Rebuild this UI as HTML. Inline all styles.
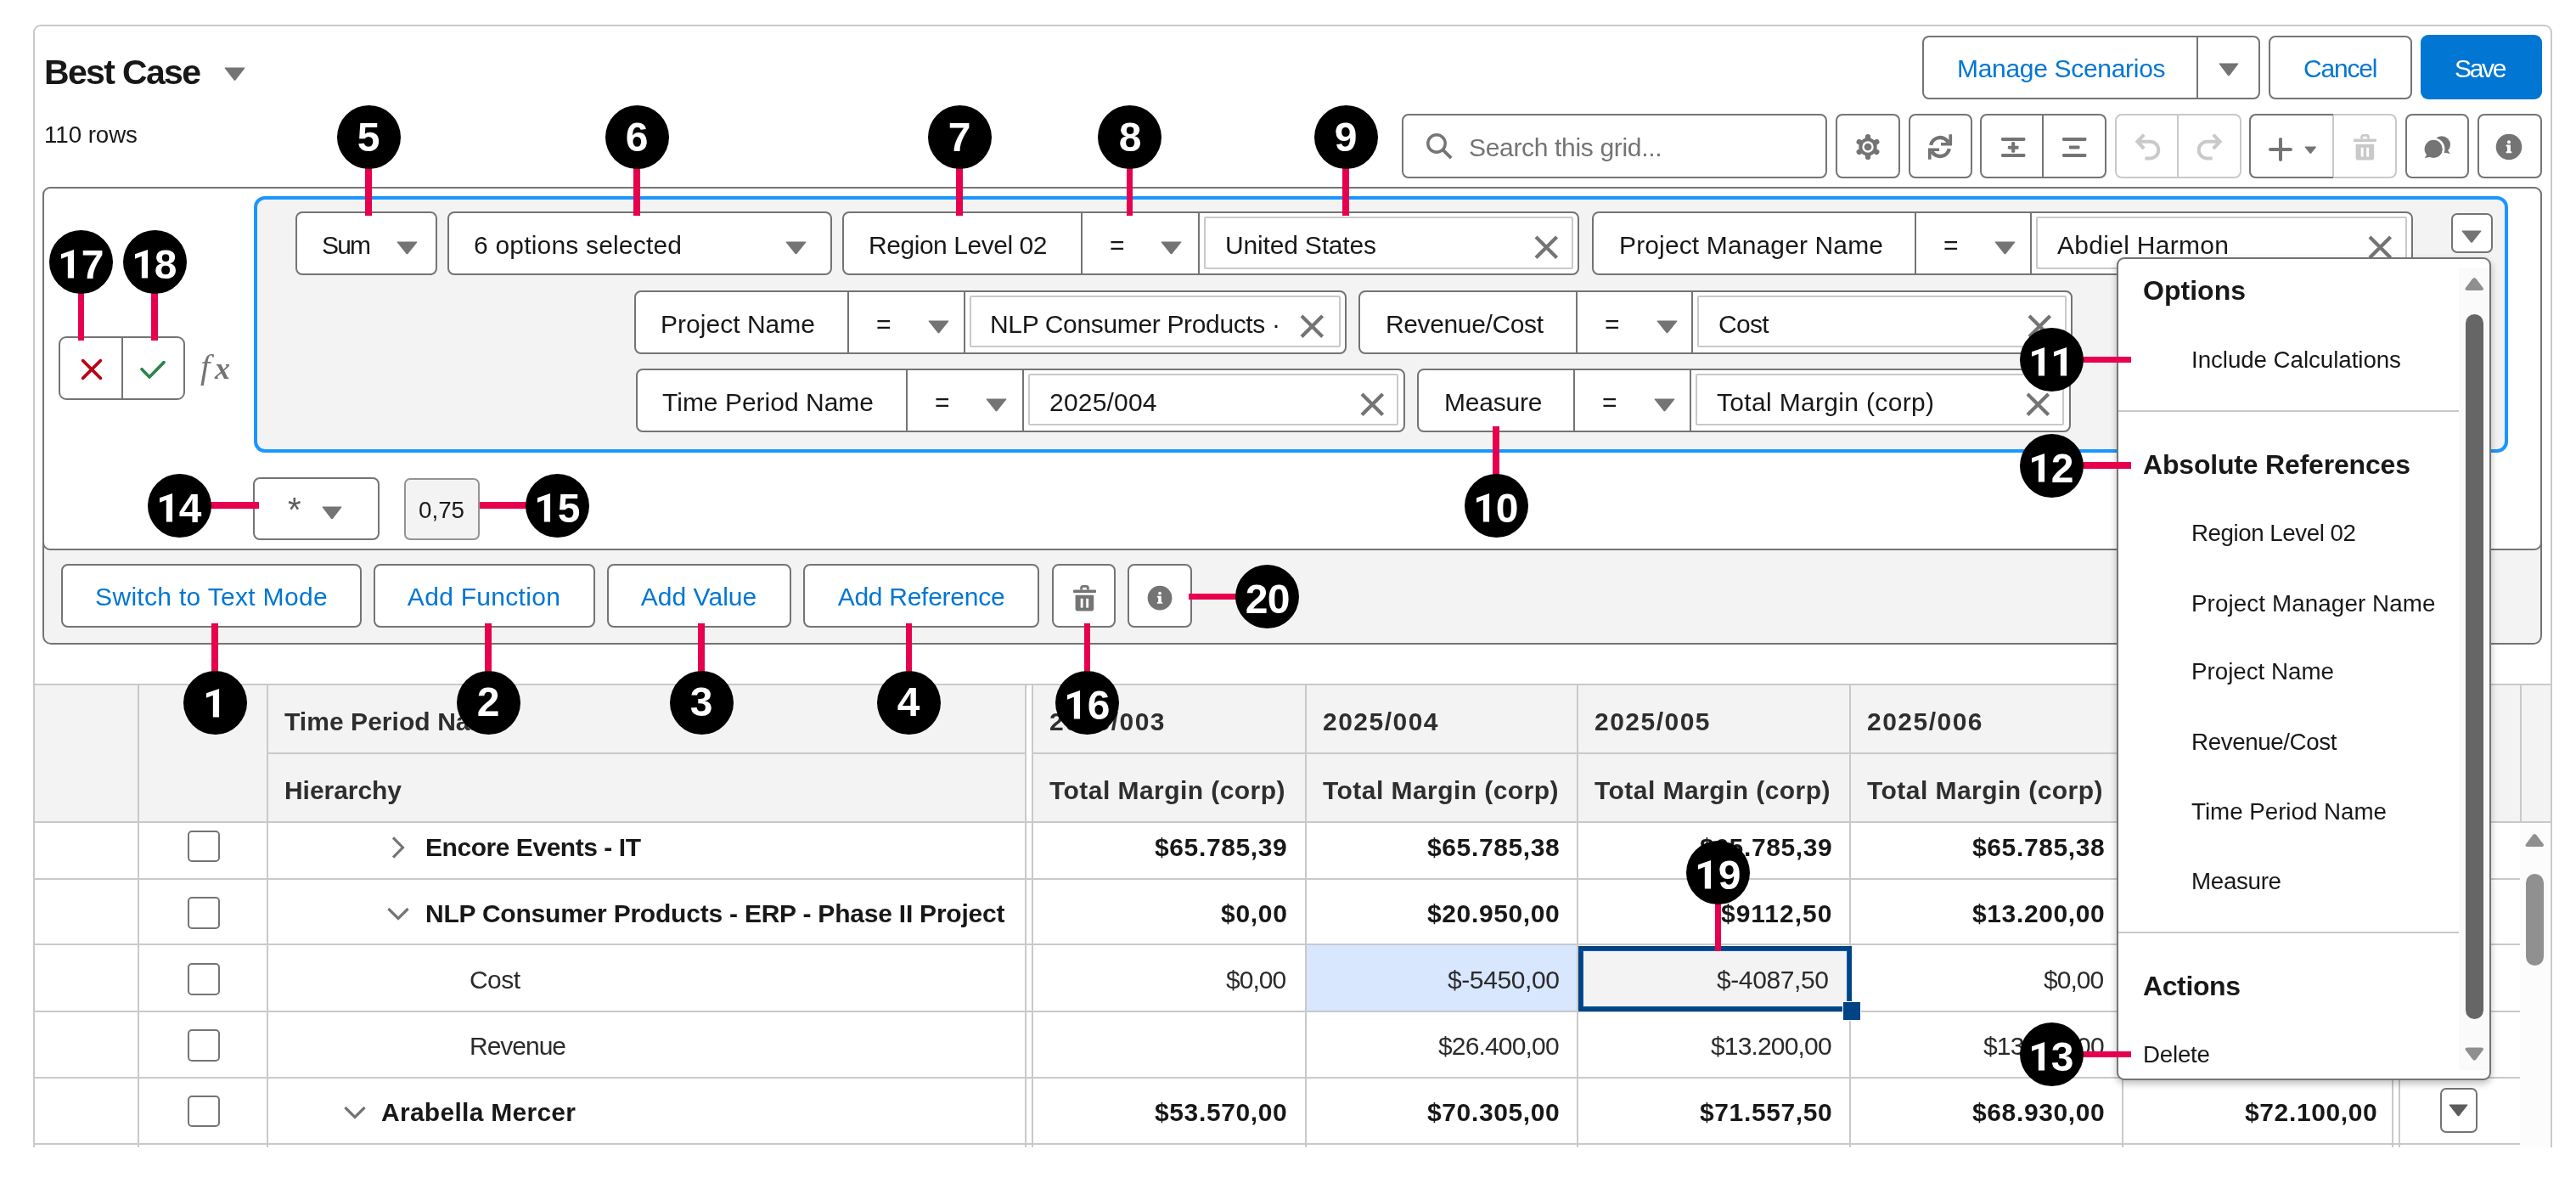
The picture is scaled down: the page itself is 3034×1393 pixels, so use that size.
<!DOCTYPE html>
<html><head><meta charset="utf-8"><title>Formula editor</title><style>html,body{margin:0;padding:0;background:#fff}
body{width:3034px;height:1393px}
#r{position:relative;width:3034px;height:1393px;overflow:hidden;background:#fff;font-family:'Liberation Sans',sans-serif}
#r>div,#r>span,#r>svg{position:absolute;box-sizing:content-box}
#r>span{white-space:nowrap;display:block;will-change:transform}
svg{overflow:visible}</style></head><body><div id="r">
<div style="left:39px;top:29px;width:2963px;height:1400px;border:2px solid #c9c9c9;border-radius:9px;background:#fff"></div>
<span id="t0" style="left:52px;top:64.97px;font:normal bold 41px/41px 'Liberation Sans',sans-serif;color:#181818;letter-spacing:-1.66px;">Best Case</span>
<svg style="left:263.5px;top:79.0px;" width="25" height="16" viewBox="0 0 25 16"><path d="M1.2 0.4 H23.8 Q25 0.4 24.2 1.6 L13.4 15.4 Q12.5 16.2 11.6 15.4 L0.8 1.6 Q0 0.4 1.2 0.4Z" fill="#747474"/></svg>
<span id="t1" style="left:52px;top:144.74px;font:normal normal 27.75px/27.75px 'Liberation Sans',sans-serif;color:#181818;letter-spacing:-0.078px;">110 rows</span>
<div style="left:2264.2px;top:41.5px;width:393.8px;height:71.5px;border:2px solid #747474;background:#fff;border-radius:8px;"></div>
<div style="left:2586.5px;top:43px;width:2.0px;height:72px;background:#747474;"></div>
<span id="t2" style="left:2304.5px;top:66.34px;font:normal normal 30px/30px 'Liberation Sans',sans-serif;color:#0176d3;letter-spacing:-0.31px;">Manage Scenarios</span>
<svg style="left:2612.5px;top:73.75px;" width="24" height="15.5" viewBox="0 0 24 15.5"><path d="M1.2 0.4 H22.8 Q24 0.4 23.2 1.6 L12.9 14.9 Q12.0 15.7 11.1 14.9 L0.8 1.6 Q0 0.4 1.2 0.4Z" fill="#747474"/></svg>
<div style="left:2672.2px;top:41.5px;width:165.3px;height:71.5px;border:2px solid #747474;background:#fff;border-radius:8px;"></div>
<span id="t3" style="left:2712.5px;top:66.34px;font:normal normal 30px/30px 'Liberation Sans',sans-serif;color:#0176d3;letter-spacing:-1.178px;">Cancel</span>
<div style="left:2850.5px;top:41px;width:143.0px;height:76px;background:#0176d3;border-radius:9px;"></div>
<span id="t4" style="left:2891px;top:66.34px;font:normal normal 30px/30px 'Liberation Sans',sans-serif;color:#fff;letter-spacing:-2.297px;">Save</span>
<div style="left:1651px;top:134px;width:497px;height:71.5px;border:2px solid #747474;background:#fff;border-radius:8px;"></div>
<svg style="left:1677.9px;top:155px;" width="36" height="36" viewBox="0 0 36 36"><circle cx="14" cy="14" r="10.2" fill="none" stroke="#747474" stroke-width="3.4"/><path d="M20.6 20.6 L31.2 31.2" stroke="#747474" stroke-width="3.9"/></svg>
<span id="t5" style="left:1729.5px;top:159.04px;font:normal normal 30px/30px 'Liberation Sans',sans-serif;color:#747474;letter-spacing:-0.33px;">Search this grid...</span>
<div style="left:2162px;top:134px;width:72px;height:71.5px;border:2px solid #747474;background:#fff;border-radius:8px;"></div>
<svg style="left:2184.4px;top:157px;" width="32" height="32" viewBox="0 0 32 32"><circle cx="16" cy="16" r="10.7" fill="#747474"/><path d="M16.00 8.00 L16.00 4.10 M22.93 12.00 L26.31 10.05 M22.93 20.00 L26.31 21.95 M16.00 24.00 L16.00 27.90 M9.07 20.00 L5.69 21.95 M9.07 12.00 L5.69 10.05 " stroke="#747474" stroke-width="6.3" stroke-linecap="round" fill="none"/><circle cx="16" cy="16" r="6.7" fill="#fff"/><circle cx="16" cy="16" r="4.35" fill="#747474"/></svg>
<div style="left:2248px;top:134px;width:71px;height:71.5px;border:2px solid #747474;background:#fff;border-radius:8px;"></div>
<svg style="left:2268.8px;top:157.3px;" width="32" height="32" viewBox="0 0 32 32"><path d="M5.20 13.90 A11 11 0 0 1 25.71 10.84" fill="none" stroke="#747474" stroke-width="4.5"/><path d="M26.80 18.10 A11 11 0 0 1 6.29 21.16" fill="none" stroke="#747474" stroke-width="4.5"/><path d="M26.4 1.3 H30.1 V14.4 H17 V11.1 H26.4Z" fill="#747474"/><path d="M5.6 30.7 H1.9 V17.6 H15 V20.9 H5.6Z" fill="#747474"/></svg>
<div style="left:2331.5px;top:134px;width:145.5px;height:71.5px;border:2px solid #747474;background:#fff;border-radius:8px;"></div>
<div style="left:2405.3px;top:136px;width:2.0px;height:71.5px;background:#747474;"></div>
<svg style="left:2356.9px;top:162.0px;" width="28.4" height="23.6" viewBox="0 0 28.4 23.6"><rect x="0" y="0" width="28.4" height="3.9" rx="1.4" fill="#747474"/><rect x="0" y="19" width="28.4" height="3.9" rx="1.4" fill="#747474"/><rect x="7.8" y="9.7" width="12.8" height="4" rx="1.4" fill="#747474"/><rect x="12.2" y="5" width="4" height="12.8" rx="1.4" fill="#747474"/></svg>
<svg style="left:2429.2px;top:162.0px;" width="28.4" height="23.6" viewBox="0 0 28.4 23.6"><rect x="0" y="0" width="28.4" height="3.9" rx="1.4" fill="#747474"/><rect x="0" y="19" width="28.4" height="3.9" rx="1.4" fill="#747474"/><rect x="7.8" y="9.6" width="12.8" height="3.8" rx="1.4" fill="#747474"/></svg>
<div style="left:2490.5px;top:134px;width:145.5px;height:71.5px;border:2px solid #c9c9c9;background:#fff;border-radius:8px;"></div>
<div style="left:2564.0px;top:136px;width:2.0px;height:71.5px;background:#c9c9c9;"></div>
<svg style="left:2514.6px;top:157.6px;" width="30" height="31" viewBox="0 0 30 31"><g><path d="M10.2 0.6 L2.4 8.8 L10.2 17 M3 8.8 H17.4 A9.85 9.85 0 0 1 17.4 28.5 H11.4" fill="none" stroke="#c9c9c9" stroke-width="4" stroke-linejoin="miter"/></g></svg>
<svg style="left:2586.8px;top:157.6px;" width="30" height="31" viewBox="0 0 30 31"><g transform="translate(30,0) scale(-1,1)"><path d="M10.2 0.6 L2.4 8.8 L10.2 17 M3 8.8 H17.4 A9.85 9.85 0 0 1 17.4 28.5 H11.4" fill="none" stroke="#c9c9c9" stroke-width="4" stroke-linejoin="miter"/></g></svg>
<div style="left:2649px;top:134px;width:170px;height:71.5px;border:2px solid #c9c9c9;background:#fff;border-radius:8px;"></div>
<div style="left:2649px;top:134px;width:97px;height:71.5px;border:2px solid #747474;border-right:none;border-radius:8px 0 0 8px;background:#fff"></div>
<div style="left:2747.4px;top:136px;width:2.0px;height:71.5px;background:#c9c9c9;"></div>
<svg style="left:2672px;top:162.3px;" width="28" height="28" viewBox="0 0 28 28"><path d="M14 2 V26 M2 14 H26" stroke="#747474" stroke-width="4" stroke-linecap="round"/></svg>
<svg style="left:2714.1px;top:171.9px;" width="14.6" height="9.2" viewBox="0 0 14.6 9.2"><path d="M1.2 0.4 H13.4 Q14.6 0.4 13.799999999999999 1.6 L8.2 8.6 Q7.3 9.399999999999999 6.3999999999999995 8.6 L0.8 1.6 Q0 0.4 1.2 0.4Z" fill="#747474"/></svg>
<svg style="left:2772.4px;top:157.8px;" width="27" height="31" viewBox="0 0 27 31"><rect x="0" y="5.4" width="27" height="3.6" rx="1" fill="#c9c9c9"/><path d="M9.6 5.6 V3.4 Q9.6 1.4 11.6 1.4 H15.4 Q17.4 1.4 17.4 3.4 V5.6" fill="none" stroke="#c9c9c9" stroke-width="2.8"/><path d="M2.6 11.8 H24.2 V27.8 Q24.2 30.6 21.4 30.6 H5.4 Q2.6 30.6 2.6 27.8Z" fill="#c9c9c9"/><rect x="8.7" y="15.8" width="2.9" height="10.8" fill="#fff"/><rect x="15.2" y="15.8" width="2.9" height="10.8" fill="#fff"/></svg>
<div style="left:2833px;top:134px;width:71.3px;height:71.5px;border:2px solid #747474;background:#fff;border-radius:8px;"></div>
<svg style="left:2854.5px;top:160.2px;" width="32" height="27" viewBox="0 0 32 27"><circle cx="20.8" cy="10.4" r="10.2" fill="#747474"/><path d="M27 16 L31 21 L23 19.4Z" fill="#747474"/><circle cx="11.2" cy="15.4" r="13.2" fill="#fff"/><circle cx="11.2" cy="15.4" r="10.6" fill="#747474"/><path d="M4 21 L0.8 26 L9 24.6Z" fill="#747474"/></svg>
<div style="left:2918.2px;top:134px;width:71.5px;height:71.5px;border:2px solid #747474;background:#fff;border-radius:8px;"></div>
<svg style="left:2939.2px;top:157.4px;" width="32.0" height="32.0" viewBox="0 0 32 32"><circle cx="16" cy="16" r="15.3" fill="#747474"/><circle cx="16" cy="10.2" r="2" fill="#fff"/><path d="M12.6 13.6 H17.9 V20.4 Q17.9 21.4 19.3 21.6 V23.2 H12.6 V21.6 Q14 21.4 14 20.4 V16.4 Q14 15.4 12.6 15.2Z" fill="#fff"/></svg>
<div style="left:50px;top:220px;width:2940px;height:535px;border:2px solid #747474;background:#f3f3f3;border-radius:10px;"></div>
<div style="left:50px;top:220px;width:2940px;height:423.5px;border:2px solid #747474;background:#fff;border-radius:9px;"></div>
<div style="left:298.5px;top:230.6px;width:2647.3px;height:294.0px;border:4px solid #1b96ff;background:#f3f3f3;border-radius:13px;"></div>
<div style="left:69.3px;top:396px;width:144.9px;height:71.2px;border:2px solid #747474;background:#fff;border-radius:9px;"></div>
<div style="left:143.0px;top:398px;width:2.0px;height:71.2px;background:#747474;"></div>
<svg style="left:93.5px;top:421px;" width="28" height="28" viewBox="0 0 28 28"><path d="M3.6 3.6 L24.4 24.4 M24.4 3.6 L3.6 24.4" stroke="#ba0517" stroke-width="3.7" stroke-linecap="round" fill="none"/></svg>
<svg style="left:164px;top:423px;" width="32" height="26" viewBox="0 0 32 26"><path d="M3 11.8 L12 21 L29 3.6" stroke="#2e844a" stroke-width="3.7" stroke-linecap="round" stroke-linejoin="round" fill="none"/></svg>
<span id="t6" style="left:236px;top:411.47px;font:italic normal 41px/41px 'Liberation Serif',serif;color:#747474;letter-spacing:0px;">f</span>
<span id="t7" style="left:252.5px;top:415.91px;font:italic bold 36px/36px 'Liberation Serif',serif;color:#747474;letter-spacing:0px;">x</span>
<div style="left:347.5px;top:249px;width:163.0px;height:71px;border:2px solid #747474;background:#fff;border-radius:8px;"></div>
<span id="t8" style="left:378.5px;top:273.85px;font:normal normal 30px/30px 'Liberation Sans',sans-serif;color:#181818;letter-spacing:-1.844px;">Sum</span>
<svg style="left:467.0px;top:283.75px;" width="25" height="15.5" viewBox="0 0 25 15.5"><path d="M1.2 0.4 H23.8 Q25 0.4 24.2 1.6 L13.4 14.9 Q12.5 15.7 11.6 14.9 L0.8 1.6 Q0 0.4 1.2 0.4Z" fill="#747474"/></svg>
<div style="left:526.5px;top:249px;width:449.0px;height:71px;border:2px solid #747474;background:#fff;border-radius:8px;"></div>
<span id="t9" style="left:558px;top:273.85px;font:normal normal 30px/30px 'Liberation Sans',sans-serif;color:#181818;letter-spacing:0.186px;">6 options selected</span>
<svg style="left:925.0px;top:283.75px;" width="25" height="15.5" viewBox="0 0 25 15.5"><path d="M1.2 0.4 H23.8 Q25 0.4 24.2 1.6 L13.4 14.9 Q12.5 15.7 11.6 14.9 L0.8 1.6 Q0 0.4 1.2 0.4Z" fill="#747474"/></svg>
<div style="left:991.5px;top:249px;width:864.5px;height:71px;border:2px solid #747474;background:#fff;border-radius:8px;"></div>
<div style="left:1272.7px;top:251px;width:2.0px;height:71px;background:#747474;"></div>
<div style="left:1411.0px;top:251px;width:2.0px;height:71px;background:#747474;"></div>
<span id="t10" style="left:1023.0px;top:273.85px;font:normal normal 30px/30px 'Liberation Sans',sans-serif;color:#181818;letter-spacing:-0.452px;">Region Level 02</span>
<span id="t11" style="left:1306.7px;top:273.85px;font:normal normal 30px/30px 'Liberation Sans',sans-serif;color:#181818;letter-spacing:-1.531px;">=</span>
<svg style="left:1367.2px;top:283.75px;" width="25" height="15.5" viewBox="0 0 25 15.5"><path d="M1.2 0.4 H23.8 Q25 0.4 24.2 1.6 L13.4 14.9 Q12.5 15.7 11.6 14.9 L0.8 1.6 Q0 0.4 1.2 0.4Z" fill="#747474"/></svg>
<div style="left:1418px;top:255px;width:430.6px;height:57.6px;border:2px solid #c9c9c9;background:#fff;border-radius:2px;"></div>
<span id="t12" style="left:1442.5px;top:273.85px;font:normal normal 30px/30px 'Liberation Sans',sans-serif;color:#181818;letter-spacing:-0.176px;">United States</span>
<svg style="left:1807.2px;top:277.2px;" width="28.6" height="28.6" viewBox="0 0 28.6 28.6"><path d="M2 2 L26.6 26.6 M26.6 2 L2 26.6" stroke="#747474" stroke-width="4.2" fill="none"/></svg>
<div style="left:1875px;top:249px;width:963px;height:71px;border:2px solid #747474;background:#fff;border-radius:8px;"></div>
<div style="left:2254.5px;top:251px;width:2.0px;height:71px;background:#747474;"></div>
<div style="left:2391.0px;top:251px;width:2.0px;height:71px;background:#747474;"></div>
<span id="t13" style="left:1906.5px;top:273.85px;font:normal normal 30px/30px 'Liberation Sans',sans-serif;color:#181818;letter-spacing:0.133px;">Project Manager Name</span>
<span id="t14" style="left:2288.5px;top:273.85px;font:normal normal 30px/30px 'Liberation Sans',sans-serif;color:#181818;letter-spacing:-1.531px;">=</span>
<svg style="left:2349.0px;top:283.75px;" width="25" height="15.5" viewBox="0 0 25 15.5"><path d="M1.2 0.4 H23.8 Q25 0.4 24.2 1.6 L13.4 14.9 Q12.5 15.7 11.6 14.9 L0.8 1.6 Q0 0.4 1.2 0.4Z" fill="#747474"/></svg>
<div style="left:2398px;top:255px;width:432.6px;height:57.6px;border:2px solid #c9c9c9;background:#fff;border-radius:2px;"></div>
<span id="t15" style="left:2422.5px;top:273.85px;font:normal normal 30px/30px 'Liberation Sans',sans-serif;color:#181818;letter-spacing:0.297px;">Abdiel Harmon</span>
<svg style="left:2789.2px;top:277.2px;" width="28.6" height="28.6" viewBox="0 0 28.6 28.6"><path d="M2 2 L26.6 26.6 M26.6 2 L2 26.6" stroke="#747474" stroke-width="4.2" fill="none"/></svg>
<div style="left:746.5px;top:342px;width:835.5px;height:70.5px;border:2px solid #747474;background:#fff;border-radius:8px;"></div>
<div style="left:998.0px;top:344px;width:2.0px;height:70.5px;background:#747474;"></div>
<div style="left:1134.5px;top:344px;width:2.0px;height:70.5px;background:#747474;"></div>
<span id="t16" style="left:778.0px;top:366.60px;font:normal normal 30px/30px 'Liberation Sans',sans-serif;color:#181818;letter-spacing:0.024px;">Project Name</span>
<span id="t17" style="left:1032px;top:366.60px;font:normal normal 30px/30px 'Liberation Sans',sans-serif;color:#181818;letter-spacing:-1.531px;">=</span>
<svg style="left:1092.5px;top:376.5px;" width="25" height="15.5" viewBox="0 0 25 15.5"><path d="M1.2 0.4 H23.8 Q25 0.4 24.2 1.6 L13.4 14.9 Q12.5 15.7 11.6 14.9 L0.8 1.6 Q0 0.4 1.2 0.4Z" fill="#747474"/></svg>
<div style="left:1141.5px;top:348px;width:433.1px;height:57.1px;border:2px solid #c9c9c9;background:#fff;border-radius:2px;"></div>
<span id="t18" style="left:1166.0px;top:366.60px;font:normal normal 30px/30px 'Liberation Sans',sans-serif;color:#181818;letter-spacing:-0.345px;">NLP Consumer Products ·</span>
<svg style="left:1531.2px;top:369.95px;" width="28.6" height="28.6" viewBox="0 0 28.6 28.6"><path d="M2 2 L26.6 26.6 M26.6 2 L2 26.6" stroke="#747474" stroke-width="4.2" fill="none"/></svg>
<div style="left:1600px;top:342px;width:837px;height:70.5px;border:2px solid #747474;background:#fff;border-radius:8px;"></div>
<div style="left:1856.0px;top:344px;width:2.0px;height:70.5px;background:#747474;"></div>
<div style="left:1992.0px;top:344px;width:2.0px;height:70.5px;background:#747474;"></div>
<span id="t19" style="left:1631.5px;top:366.60px;font:normal normal 30px/30px 'Liberation Sans',sans-serif;color:#181818;letter-spacing:-0.374px;">Revenue/Cost</span>
<span id="t20" style="left:1890px;top:366.60px;font:normal normal 30px/30px 'Liberation Sans',sans-serif;color:#181818;letter-spacing:-1.531px;">=</span>
<svg style="left:1950.5px;top:376.5px;" width="25" height="15.5" viewBox="0 0 25 15.5"><path d="M1.2 0.4 H23.8 Q25 0.4 24.2 1.6 L13.4 14.9 Q12.5 15.7 11.6 14.9 L0.8 1.6 Q0 0.4 1.2 0.4Z" fill="#747474"/></svg>
<div style="left:1999px;top:348px;width:430.6px;height:57.1px;border:2px solid #c9c9c9;background:#fff;border-radius:2px;"></div>
<span id="t21" style="left:2023.5px;top:366.60px;font:normal normal 30px/30px 'Liberation Sans',sans-serif;color:#181818;letter-spacing:-0.729px;">Cost</span>
<svg style="left:2388.2px;top:369.95px;" width="28.6" height="28.6" viewBox="0 0 28.6 28.6"><path d="M2 2 L26.6 26.6 M26.6 2 L2 26.6" stroke="#747474" stroke-width="4.2" fill="none"/></svg>
<div style="left:748.5px;top:434px;width:902.0px;height:70.5px;border:2px solid #747474;background:#fff;border-radius:8px;"></div>
<div style="left:1066.5px;top:436px;width:2.0px;height:70.5px;background:#747474;"></div>
<div style="left:1204.0px;top:436px;width:2.0px;height:70.5px;background:#747474;"></div>
<span id="t22" style="left:780.0px;top:458.60px;font:normal normal 30px/30px 'Liberation Sans',sans-serif;color:#181818;letter-spacing:0.002px;">Time Period Name</span>
<span id="t23" style="left:1100.5px;top:458.60px;font:normal normal 30px/30px 'Liberation Sans',sans-serif;color:#181818;letter-spacing:-1.531px;">=</span>
<svg style="left:1161.0px;top:468.5px;" width="25" height="15.5" viewBox="0 0 25 15.5"><path d="M1.2 0.4 H23.8 Q25 0.4 24.2 1.6 L13.4 14.9 Q12.5 15.7 11.6 14.9 L0.8 1.6 Q0 0.4 1.2 0.4Z" fill="#747474"/></svg>
<div style="left:1211px;top:440px;width:432.1px;height:57.1px;border:2px solid #c9c9c9;background:#fff;border-radius:2px;"></div>
<span id="t24" style="left:1235.5px;top:458.60px;font:normal normal 30px/30px 'Liberation Sans',sans-serif;color:#181818;letter-spacing:0.194px;">2025/004</span>
<svg style="left:1601.7px;top:461.95px;" width="28.6" height="28.6" viewBox="0 0 28.6 28.6"><path d="M2 2 L26.6 26.6 M26.6 2 L2 26.6" stroke="#747474" stroke-width="4.2" fill="none"/></svg>
<div style="left:1669px;top:434px;width:765.5px;height:70.5px;border:2px solid #747474;background:#fff;border-radius:8px;"></div>
<div style="left:1853.0px;top:436px;width:2.0px;height:70.5px;background:#747474;"></div>
<div style="left:1990.0px;top:436px;width:2.0px;height:70.5px;background:#747474;"></div>
<span id="t25" style="left:1700.5px;top:458.60px;font:normal normal 30px/30px 'Liberation Sans',sans-serif;color:#181818;letter-spacing:-0.203px;">Measure</span>
<span id="t26" style="left:1887px;top:458.60px;font:normal normal 30px/30px 'Liberation Sans',sans-serif;color:#181818;letter-spacing:-1.531px;">=</span>
<svg style="left:1947.5px;top:468.5px;" width="25" height="15.5" viewBox="0 0 25 15.5"><path d="M1.2 0.4 H23.8 Q25 0.4 24.2 1.6 L13.4 14.9 Q12.5 15.7 11.6 14.9 L0.8 1.6 Q0 0.4 1.2 0.4Z" fill="#747474"/></svg>
<div style="left:1997px;top:440px;width:430.1px;height:57.1px;border:2px solid #c9c9c9;background:#fff;border-radius:2px;"></div>
<span id="t27" style="left:2021.5px;top:458.60px;font:normal normal 30px/30px 'Liberation Sans',sans-serif;color:#181818;letter-spacing:0.329px;">Total Margin (corp)</span>
<svg style="left:2385.7px;top:461.95px;" width="28.6" height="28.6" viewBox="0 0 28.6 28.6"><path d="M2 2 L26.6 26.6 M26.6 2 L2 26.6" stroke="#747474" stroke-width="4.2" fill="none"/></svg>
<div style="left:2887px;top:250.5px;width:44.5px;height:43.5px;border:2px solid #747474;background:#fff;border-radius:7px;"></div>
<svg style="left:2899.3px;top:270.5px;" width="24" height="15" viewBox="0 0 24 15"><path d="M1.2 0.4 H22.8 Q24 0.4 23.2 1.6 L12.9 14.4 Q12.0 15.2 11.1 14.4 L0.8 1.6 Q0 0.4 1.2 0.4Z" fill="#747474"/></svg>
<div style="left:298px;top:561.5px;width:145px;height:70.0px;border:2px solid #747474;background:#fff;border-radius:8px;"></div>
<span id="t28" style="left:338.5px;top:580.46px;font:normal normal 40px/40px 'Liberation Sans',sans-serif;color:#5c5c5c;letter-spacing:0px;">*</span>
<svg style="left:378.5px;top:596.25px;" width="24" height="15.5" viewBox="0 0 24 15.5"><path d="M1.2 0.4 H22.8 Q24 0.4 23.2 1.6 L12.9 14.9 Q12.0 15.7 11.1 14.9 L0.8 1.6 Q0 0.4 1.2 0.4Z" fill="#747474"/></svg>
<div style="left:476px;top:562.5px;width:85px;height:69.0px;border:2px solid #939393;background:#f3f3f3;border-radius:7px;"></div>
<span id="t29" style="left:492.5px;top:586.74px;font:normal normal 27.75px/27.75px 'Liberation Sans',sans-serif;color:#181818;letter-spacing:-0.005px;">0,75</span>
<div style="left:71.5px;top:664px;width:350.0px;height:71px;border:2px solid #747474;background:#fff;border-radius:8px;"></div>
<span id="t30" style="left:248.5px;transform:translateX(-50%);top:687.75px;font:normal normal 30px/30px 'Liberation Sans',sans-serif;color:#0176d3;letter-spacing:0.311px;">Switch to Text Mode</span>
<div style="left:439.5px;top:664px;width:257.0px;height:71px;border:2px solid #747474;background:#fff;border-radius:8px;"></div>
<span id="t31" style="left:570.0px;transform:translateX(-50%);top:687.75px;font:normal normal 30px/30px 'Liberation Sans',sans-serif;color:#0176d3;letter-spacing:0.293px;">Add Function</span>
<div style="left:714.5px;top:664px;width:213.5px;height:71px;border:2px solid #747474;background:#fff;border-radius:8px;"></div>
<span id="t32" style="left:823.25px;transform:translateX(-50%);top:687.75px;font:normal normal 30px/30px 'Liberation Sans',sans-serif;color:#0176d3;letter-spacing:0.035px;">Add Value</span>
<div style="left:946px;top:664px;width:273.5px;height:71px;border:2px solid #747474;background:#fff;border-radius:8px;"></div>
<span id="t33" style="left:1084.75px;transform:translateX(-50%);top:687.75px;font:normal normal 30px/30px 'Liberation Sans',sans-serif;color:#0176d3;letter-spacing:-0.262px;">Add Reference</span>
<div style="left:1238.5px;top:664px;width:71.5px;height:71px;border:2px solid #747474;background:#fff;border-radius:8px;"></div>
<svg style="left:1263.6px;top:688.6px;" width="27" height="31" viewBox="0 0 27 31"><rect x="0" y="5.4" width="27" height="3.6" rx="1" fill="#747474"/><path d="M9.6 5.6 V3.4 Q9.6 1.4 11.6 1.4 H15.4 Q17.4 1.4 17.4 3.4 V5.6" fill="none" stroke="#747474" stroke-width="2.8"/><path d="M2.6 11.8 H24.2 V27.8 Q24.2 30.6 21.4 30.6 H5.4 Q2.6 30.6 2.6 27.8Z" fill="#747474"/><rect x="8.7" y="15.8" width="2.9" height="10.8" fill="#fff"/><rect x="15.2" y="15.8" width="2.9" height="10.8" fill="#fff"/></svg>
<div style="left:1328px;top:664px;width:71.5px;height:71px;border:2px solid #747474;background:#fff;border-radius:8px;"></div>
<svg style="left:1350.74px;top:688.74px;" width="30.12" height="30.12" viewBox="0 0 32 32"><circle cx="16" cy="16" r="15.3" fill="#747474"/><circle cx="16" cy="10.2" r="2" fill="#fff"/><path d="M12.6 13.6 H17.9 V20.4 Q17.9 21.4 19.3 21.6 V23.2 H12.6 V21.6 Q14 21.4 14 20.4 V16.4 Q14 15.4 12.6 15.2Z" fill="#fff"/></svg>
<div style="left:41px;top:806px;width:2963px;height:162px;background:#f3f3f3;"></div>
<div style="left:1538.5px;top:1113px;width:319.5px;height:76.5px;background:#d8e6fe;"></div>
<div style="left:41px;top:805.0px;width:2963px;height:2.0px;background:#c9c9c9;"></div>
<div style="left:314.5px;top:885.5px;width:2511.0px;height:2.0px;background:#c9c9c9;"></div>
<div style="left:41px;top:967.0px;width:2963px;height:2.0px;background:#c9c9c9;"></div>
<div style="left:41px;top:1033.5px;width:2926.7px;height:2.0px;background:#c9c9c9;"></div>
<div style="left:41px;top:1111.0px;width:2926.7px;height:2.0px;background:#c9c9c9;"></div>
<div style="left:41px;top:1189.5px;width:2926.7px;height:2.0px;background:#c9c9c9;"></div>
<div style="left:41px;top:1267.5px;width:2926.7px;height:2.0px;background:#c9c9c9;"></div>
<div style="left:41px;top:1345.5px;width:2926.7px;height:2.0px;background:#c9c9c9;"></div>
<div style="left:1209.3px;top:807px;width:5.7px;height:160px;background:#fff;"></div>
<div style="left:162.0px;top:806px;width:2.0px;height:544.5px;background:#c9c9c9;"></div>
<div style="left:313.5px;top:806px;width:2.0px;height:544.5px;background:#c9c9c9;"></div>
<div style="left:1207.3px;top:806px;width:2.0px;height:544.5px;background:#c9c9c9;"></div>
<div style="left:1215.0px;top:806px;width:2.0px;height:544.5px;background:#c9c9c9;"></div>
<div style="left:1536.5px;top:806px;width:2.0px;height:544.5px;background:#c9c9c9;"></div>
<div style="left:1857.0px;top:806px;width:2.0px;height:544.5px;background:#c9c9c9;"></div>
<div style="left:2178.0px;top:806px;width:2.0px;height:544.5px;background:#c9c9c9;"></div>
<div style="left:2499.0px;top:806px;width:2.0px;height:544.5px;background:#c9c9c9;"></div>
<div style="left:2817.2px;top:806px;width:2.0px;height:544.5px;background:#c9c9c9;"></div>
<div style="left:2824.5px;top:806px;width:2.0px;height:544.5px;background:#c9c9c9;"></div>
<div style="left:2967.7px;top:806px;width:2.0px;height:162px;background:#c9c9c9;"></div>
<span id="t34" style="left:334.5px;top:834.75px;font:normal bold 30px/30px 'Liberation Sans',sans-serif;color:#2e2e2e;letter-spacing:0.052px;">Time Period Name</span>
<span id="t35" style="left:334.5px;top:915.55px;font:normal bold 30px/30px 'Liberation Sans',sans-serif;color:#2e2e2e;letter-spacing:-0.053px;">Hierarchy</span>
<span id="t36" style="left:1236px;top:834.75px;font:normal bold 30px/30px 'Liberation Sans',sans-serif;color:#2e2e2e;letter-spacing:1.48px;">2025/003</span>
<span id="t37" style="left:1236px;top:915.55px;font:normal bold 30px/30px 'Liberation Sans',sans-serif;color:#2e2e2e;letter-spacing:0.448px;">Total Margin (corp)</span>
<span id="t38" style="left:1557.5px;top:834.75px;font:normal bold 30px/30px 'Liberation Sans',sans-serif;color:#2e2e2e;letter-spacing:1.48px;">2025/004</span>
<span id="t39" style="left:1557.5px;top:915.55px;font:normal bold 30px/30px 'Liberation Sans',sans-serif;color:#2e2e2e;letter-spacing:0.448px;">Total Margin (corp)</span>
<span id="t40" style="left:1878px;top:834.75px;font:normal bold 30px/30px 'Liberation Sans',sans-serif;color:#2e2e2e;letter-spacing:1.48px;">2025/005</span>
<span id="t41" style="left:1878px;top:915.55px;font:normal bold 30px/30px 'Liberation Sans',sans-serif;color:#2e2e2e;letter-spacing:0.448px;">Total Margin (corp)</span>
<span id="t42" style="left:2199px;top:834.75px;font:normal bold 30px/30px 'Liberation Sans',sans-serif;color:#2e2e2e;letter-spacing:1.48px;">2025/006</span>
<span id="t43" style="left:2199px;top:915.55px;font:normal bold 30px/30px 'Liberation Sans',sans-serif;color:#2e2e2e;letter-spacing:0.448px;">Total Margin (corp)</span>
<span id="t44" style="left:2520px;top:834.75px;font:normal bold 30px/30px 'Liberation Sans',sans-serif;color:#2e2e2e;letter-spacing:1.48px;">2025/007</span>
<span id="t45" style="left:2520px;top:915.55px;font:normal bold 30px/30px 'Liberation Sans',sans-serif;color:#2e2e2e;letter-spacing:0.448px;">Total Margin (corp)</span>
<div style="left:220.5px;top:977.5px;width:34.0px;height:33.5px;border:2px solid #747474;background:#fff;border-radius:5px;"></div>
<div style="left:220.5px;top:1056px;width:34.0px;height:33.5px;border:2px solid #747474;background:#fff;border-radius:5px;"></div>
<div style="left:220.5px;top:1134px;width:34.0px;height:33.5px;border:2px solid #747474;background:#fff;border-radius:5px;"></div>
<div style="left:220.5px;top:1212px;width:34.0px;height:33.5px;border:2px solid #747474;background:#fff;border-radius:5px;"></div>
<div style="left:220.5px;top:1289.7px;width:34.0px;height:33.5px;border:2px solid #747474;background:#fff;border-radius:5px;"></div>
<svg style="left:459.5px;top:984px;" width="18" height="28" viewBox="0 0 18 28"><path d="M3 2.4 L14.4 14 L3 25.6" fill="none" stroke="#747474" stroke-width="3.2"/></svg>
<span id="t46" style="left:501px;top:982.75px;font:normal bold 30px/30px 'Liberation Sans',sans-serif;color:#181818;letter-spacing:-0.456px;">Encore Events - IT</span>
<svg style="left:455.3px;top:1067px;" width="28" height="18" viewBox="0 0 28 18"><path d="M2.4 3 L14 14.4 L25.6 3" fill="none" stroke="#747474" stroke-width="3.2"/></svg>
<span id="t47" style="left:501px;top:1060.55px;font:normal bold 30px/30px 'Liberation Sans',sans-serif;color:#181818;letter-spacing:-0.22px;">NLP Consumer Products - ERP - Phase II Project</span>
<span id="t48" style="left:553px;top:1138.55px;font:normal normal 30px/30px 'Liberation Sans',sans-serif;color:#2b2b2b;letter-spacing:-0.562px;">Cost</span>
<span id="t49" style="left:553px;top:1216.75px;font:normal normal 30px/30px 'Liberation Sans',sans-serif;color:#2b2b2b;letter-spacing:-1.016px;">Revenue</span>
<svg style="left:403.5px;top:1301.3px;" width="28" height="18" viewBox="0 0 28 18"><path d="M2.4 3 L14 14.4 L25.6 3" fill="none" stroke="#747474" stroke-width="3.2"/></svg>
<span id="t50" style="left:448.5px;top:1294.75px;font:normal bold 30px/30px 'Liberation Sans',sans-serif;color:#181818;letter-spacing:0.277px;">Arabella Mercer</span>
<span id="t51" style="right:1518.5px;top:982.75px;font:normal bold 30px/30px 'Liberation Sans',sans-serif;color:#181818;letter-spacing:0.627px;margin-right:-0.627px;">$65.785,39</span>
<span id="t52" style="right:1197.0px;top:982.75px;font:normal bold 30px/30px 'Liberation Sans',sans-serif;color:#181818;letter-spacing:0.627px;margin-right:-0.627px;">$65.785,38</span>
<span id="t53" style="right:876.5px;top:982.75px;font:normal bold 30px/30px 'Liberation Sans',sans-serif;color:#181818;letter-spacing:0.627px;margin-right:-0.627px;">$65.785,39</span>
<span id="t54" style="right:555.5px;top:982.75px;font:normal bold 30px/30px 'Liberation Sans',sans-serif;color:#181818;letter-spacing:0.627px;margin-right:-0.627px;">$65.785,38</span>
<span id="t55" style="right:234px;top:982.75px;font:normal bold 30px/30px 'Liberation Sans',sans-serif;color:#181818;letter-spacing:0.627px;margin-right:-0.627px;">$65.785,39</span>
<span id="t56" style="right:1518.5px;top:1060.55px;font:normal bold 30px/30px 'Liberation Sans',sans-serif;color:#181818;letter-spacing:0.705px;margin-right:-0.705px;">$0,00</span>
<span id="t57" style="right:1197.0px;top:1060.55px;font:normal bold 30px/30px 'Liberation Sans',sans-serif;color:#181818;letter-spacing:0.627px;margin-right:-0.627px;">$20.950,00</span>
<span id="t58" style="right:876.5px;top:1060.55px;font:normal bold 30px/30px 'Liberation Sans',sans-serif;color:#181818;letter-spacing:0.988px;margin-right:-0.988px;">$9112,50</span>
<span id="t59" style="right:555.5px;top:1060.55px;font:normal bold 30px/30px 'Liberation Sans',sans-serif;color:#181818;letter-spacing:0.627px;margin-right:-0.627px;">$13.200,00</span>
<span id="t60" style="right:234px;top:1060.55px;font:normal bold 30px/30px 'Liberation Sans',sans-serif;color:#181818;letter-spacing:0.627px;margin-right:-0.627px;">$13.200,00</span>
<span id="t61" style="right:1518.5px;top:1138.55px;font:normal normal 30px/30px 'Liberation Sans',sans-serif;color:#2b2b2b;letter-spacing:-0.945px;margin-right:0.945px;">$0,00</span>
<span id="t62" style="right:1197.0px;top:1138.55px;font:normal normal 30px/30px 'Liberation Sans',sans-serif;color:#2b2b2b;letter-spacing:-0.403px;margin-right:0.403px;">$-5450,00</span>
<div style="left:1859px;top:1114px;width:311.5px;height:66.5px;border:5px solid #014486;background:#f3f3f3;box-shadow:inset 0 0 0 1px #0b5cab"></div>
<div style="left:2170px;top:1178.5px;width:20px;height:21px;background:#014486;border:1px solid #fff"></div>
<span id="t63" style="right:880.0px;top:1138.55px;font:normal normal 30px/30px 'Liberation Sans',sans-serif;color:#2b2b2b;letter-spacing:-0.403px;margin-right:0.403px;">$-4087,50</span>
<span id="t64" style="right:555.5px;top:1138.55px;font:normal normal 30px/30px 'Liberation Sans',sans-serif;color:#2b2b2b;letter-spacing:-0.945px;margin-right:0.945px;">$0,00</span>
<span id="t65" style="right:234px;top:1138.55px;font:normal normal 30px/30px 'Liberation Sans',sans-serif;color:#2b2b2b;letter-spacing:-0.945px;margin-right:0.945px;">$0,00</span>
<span id="t66" style="right:1197.0px;top:1216.75px;font:normal normal 30px/30px 'Liberation Sans',sans-serif;color:#2b2b2b;letter-spacing:-0.84px;margin-right:0.84px;">$26.400,00</span>
<span id="t67" style="right:876.5px;top:1216.75px;font:normal normal 30px/30px 'Liberation Sans',sans-serif;color:#2b2b2b;letter-spacing:-0.84px;margin-right:0.84px;">$13.200,00</span>
<span id="t68" style="right:555.5px;top:1216.75px;font:normal normal 30px/30px 'Liberation Sans',sans-serif;color:#2b2b2b;letter-spacing:-0.84px;margin-right:0.84px;">$13.200,00</span>
<span id="t69" style="right:234px;top:1216.75px;font:normal normal 30px/30px 'Liberation Sans',sans-serif;color:#2b2b2b;letter-spacing:-0.84px;margin-right:0.84px;">$13.200,00</span>
<span id="t70" style="right:1518.5px;top:1294.75px;font:normal bold 30px/30px 'Liberation Sans',sans-serif;color:#181818;letter-spacing:0.627px;margin-right:-0.627px;">$53.570,00</span>
<span id="t71" style="right:1197.0px;top:1294.75px;font:normal bold 30px/30px 'Liberation Sans',sans-serif;color:#181818;letter-spacing:0.627px;margin-right:-0.627px;">$70.305,00</span>
<span id="t72" style="right:876.5px;top:1294.75px;font:normal bold 30px/30px 'Liberation Sans',sans-serif;color:#181818;letter-spacing:0.627px;margin-right:-0.627px;">$71.557,50</span>
<span id="t73" style="right:555.5px;top:1294.75px;font:normal bold 30px/30px 'Liberation Sans',sans-serif;color:#181818;letter-spacing:0.627px;margin-right:-0.627px;">$68.930,00</span>
<span id="t74" style="right:234px;top:1294.75px;font:normal bold 30px/30px 'Liberation Sans',sans-serif;color:#181818;letter-spacing:0.627px;margin-right:-0.627px;">$72.100,00</span>
<div style="left:2874px;top:1281px;width:39.5px;height:48.5px;border:2px solid #747474;background:#fff;border-radius:7px;"></div>
<svg style="left:2884.2px;top:1300.25px;" width="23" height="14.5" viewBox="0 0 23 14.5"><path d="M1.2 0.4 H21.8 Q23 0.4 22.2 1.6 L12.4 13.9 Q11.5 14.7 10.6 13.9 L0.8 1.6 Q0 0.4 1.2 0.4Z" fill="#5c5c5c"/></svg>
<div style="left:2968px;top:969px;width:36px;height:381.5px;background:#fcfcfc;"></div>
<svg style="left:2973.75px;top:980.75px;" width="22.5" height="16.5" viewBox="0 0 22.5 16.5"><path d="M11.25 1 Q12.45 1 13.65 2.6 L21.9 13.5 Q22.5 16.0 19.5 16.0 H3 Q0 16.0 0.6 13.5 L8.85 2.6 Q10.05 1 11.25 1Z" fill="#8f8f8f"/></svg>
<div style="left:2975px;top:1028.5px;width:20.5px;height:108.5px;background:#909090;border-radius:10.5px;"></div>
<div style="left:0px;top:1350.5px;width:3034px;height:42.5px;background:#fff;"></div>
<div style="left:2493px;top:303px;width:436.5px;height:965px;border:2px solid #747474;border-radius:9px;background:#fff;box-shadow:0 4px 9px rgba(0,0,0,.26)"></div>
<div style="left:2896px;top:314.7px;width:35.5px;height:945.1px;background:#fafafa;"></div>
<svg style="left:2902.75px;top:325.75px;" width="22.5" height="16.5" viewBox="0 0 22.5 16.5"><path d="M11.25 1 Q12.45 1 13.65 2.6 L21.9 13.5 Q22.5 16.0 19.5 16.0 H3 Q0 16.0 0.6 13.5 L8.85 2.6 Q10.05 1 11.25 1Z" fill="#8f8f8f"/></svg>
<svg style="left:2902.75px;top:1233.25px;" width="22.5" height="16.5" viewBox="0 0 22.5 16.5"><g transform="translate(0,16.5) scale(1,-1)"><path d="M11.25 1 Q12.45 1 13.65 2.6 L21.9 13.5 Q22.5 16.0 19.5 16.0 H3 Q0 16.0 0.6 13.5 L8.85 2.6 Q10.05 1 11.25 1Z" fill="#8f8f8f"/></g></svg>
<div style="left:2904px;top:370px;width:20.9px;height:829.5px;background:#666;border-radius:10.5px;"></div>
<div style="left:2495px;top:483.0px;width:401px;height:2.0px;background:#c9c9c9;"></div>
<div style="left:2495px;top:1096.5px;width:401px;height:2.0px;background:#c9c9c9;"></div>
<span id="t75" style="left:2523.7px;top:326.17px;font:normal bold 32px/32px 'Liberation Sans',sans-serif;color:#181818;letter-spacing:0.021px;">Options</span>
<span id="t76" style="left:2580.5px;top:410.19px;font:normal normal 27.75px/27.75px 'Liberation Sans',sans-serif;color:#181818;letter-spacing:-0.072px;">Include Calculations</span>
<span id="t77" style="left:2523.7px;top:531.47px;font:normal bold 32px/32px 'Liberation Sans',sans-serif;color:#181818;letter-spacing:-0.185px;">Absolute References</span>
<span id="t78" style="left:2580.5px;top:614.44px;font:normal normal 27.75px/27.75px 'Liberation Sans',sans-serif;color:#181818;letter-spacing:-0.47px;">Region Level 02</span>
<span id="t79" style="left:2580.5px;top:696.64px;font:normal normal 27.75px/27.75px 'Liberation Sans',sans-serif;color:#181818;letter-spacing:0.113px;">Project Manager Name</span>
<span id="t80" style="left:2580.5px;top:777.44px;font:normal normal 27.75px/27.75px 'Liberation Sans',sans-serif;color:#181818;letter-spacing:-0.01px;">Project Name</span>
<span id="t81" style="left:2580.5px;top:859.84px;font:normal normal 27.75px/27.75px 'Liberation Sans',sans-serif;color:#181818;letter-spacing:-0.396px;">Revenue/Cost</span>
<span id="t82" style="left:2580.5px;top:941.64px;font:normal normal 27.75px/27.75px 'Liberation Sans',sans-serif;color:#181818;letter-spacing:-0.02px;">Time Period Name</span>
<span id="t83" style="left:2580.5px;top:1024.14px;font:normal normal 27.75px/27.75px 'Liberation Sans',sans-serif;color:#181818;letter-spacing:-0.328px;">Measure</span>
<span id="t84" style="left:2523.7px;top:1145.07px;font:normal bold 32px/32px 'Liberation Sans',sans-serif;color:#181818;letter-spacing:-0.391px;">Actions</span>
<span id="t85" style="left:2524px;top:1228.14px;font:normal normal 27.75px/27.75px 'Liberation Sans',sans-serif;color:#181818;letter-spacing:-0.244px;">Delete</span>
<div style="left:249.4px;top:734px;width:7.2px;height:93px;background:#e6004d;"></div>
<div style="left:215.5px;top:789.5px;width:75.0px;height:75.0px;border-radius:50%;background:#000"></div>
<svg style="left:242.97px;top:811.15px;" width="15.07" height="33.5" viewBox="0 0 15.07 33.5"><path d="M15.07 0 L0 5.2 V10.65 L7.84 7.84 V33.5 H15.07Z" fill="#fff"/></svg>
<div style="left:571.4px;top:734px;width:7.2px;height:93px;background:#e6004d;"></div>
<div style="left:537.5px;top:789.5px;width:75.0px;height:75.0px;border-radius:50%;background:#000"></div>
<span style="left:575px;top:803.48px;transform:translateX(-50%);font:bold 48px/48px 'Liberation Sans',sans-serif;color:#fff">2</span>
<div style="left:822.4px;top:734px;width:7.2px;height:93px;background:#e6004d;"></div>
<div style="left:788.5px;top:789.5px;width:75.0px;height:75.0px;border-radius:50%;background:#000"></div>
<span style="left:826px;top:803.48px;transform:translateX(-50%);font:bold 48px/48px 'Liberation Sans',sans-serif;color:#fff">3</span>
<div style="left:1066.7px;top:734px;width:7.2px;height:93px;background:#e6004d;"></div>
<div style="left:1032.8px;top:789.5px;width:75.0px;height:75.0px;border-radius:50%;background:#000"></div>
<span style="left:1070.3px;top:803.48px;transform:translateX(-50%);font:bold 48px/48px 'Liberation Sans',sans-serif;color:#fff">4</span>
<div style="left:1276.9px;top:734px;width:7.2px;height:93px;background:#e6004d;"></div>
<div style="left:1243.0px;top:789.5px;width:75.0px;height:75.0px;border-radius:50%;background:#000"></div>
<svg style="left:1257.3px;top:812.95px;" width="15.07" height="33.5" viewBox="0 0 15.07 33.5"><path d="M15.07 0 L0 5.2 V10.65 L7.84 7.84 V33.5 H15.07Z" fill="#fff"/></svg>
<span style="left:1293.90px;top:806.68px;transform:translateX(-50%);font:bold 48px/48px 'Liberation Sans',sans-serif;color:#fff">6</span>
<div style="left:430.4px;top:161.6px;width:7.2px;height:92.9px;background:#e6004d;"></div>
<div style="left:396.5px;top:124.1px;width:75.0px;height:75.0px;border-radius:50%;background:#000"></div>
<span style="left:434px;top:138.08px;transform:translateX(-50%);font:bold 48px/48px 'Liberation Sans',sans-serif;color:#fff">5</span>
<div style="left:746.4px;top:161.6px;width:7.2px;height:92.9px;background:#e6004d;"></div>
<div style="left:712.5px;top:124.1px;width:75.0px;height:75.0px;border-radius:50%;background:#000"></div>
<span style="left:750px;top:138.08px;transform:translateX(-50%);font:bold 48px/48px 'Liberation Sans',sans-serif;color:#fff">6</span>
<div style="left:1126.4px;top:161.6px;width:7.2px;height:92.9px;background:#e6004d;"></div>
<div style="left:1092.5px;top:124.1px;width:75.0px;height:75.0px;border-radius:50%;background:#000"></div>
<span style="left:1130px;top:138.08px;transform:translateX(-50%);font:bold 48px/48px 'Liberation Sans',sans-serif;color:#fff">7</span>
<div style="left:1326.9px;top:161.6px;width:7.2px;height:92.9px;background:#e6004d;"></div>
<div style="left:1293.0px;top:124.1px;width:75.0px;height:75.0px;border-radius:50%;background:#000"></div>
<span style="left:1330.5px;top:138.08px;transform:translateX(-50%);font:bold 48px/48px 'Liberation Sans',sans-serif;color:#fff">8</span>
<div style="left:1581.4px;top:161.6px;width:7.2px;height:92.9px;background:#e6004d;"></div>
<div style="left:1547.5px;top:124.1px;width:75.0px;height:75.0px;border-radius:50%;background:#000"></div>
<span style="left:1585px;top:138.08px;transform:translateX(-50%);font:bold 48px/48px 'Liberation Sans',sans-serif;color:#fff">9</span>
<div style="left:1758.4px;top:501.5px;width:7.2px;height:93.5px;background:#e6004d;"></div>
<div style="left:1724.5px;top:557.5px;width:75.0px;height:75.0px;border-radius:50%;background:#000"></div>
<svg style="left:1738.8px;top:580.95px;" width="15.07" height="33.5" viewBox="0 0 15.07 33.5"><path d="M15.07 0 L0 5.2 V10.65 L7.84 7.84 V33.5 H15.07Z" fill="#fff"/></svg>
<span style="left:1775.40px;top:574.68px;transform:translateX(-50%);font:bold 48px/48px 'Liberation Sans',sans-serif;color:#fff">0</span>
<div style="left:2416px;top:419.9px;width:94px;height:7.2px;background:#e6004d;"></div>
<div style="left:2378.5px;top:386.0px;width:75.0px;height:75.0px;border-radius:50%;background:#000"></div>
<svg style="left:2392.8px;top:409.45px;" width="15.07" height="33.5" viewBox="0 0 15.07 33.5"><path d="M15.07 0 L0 5.2 V10.65 L7.84 7.84 V33.5 H15.07Z" fill="#fff"/></svg>
<svg style="left:2419.2px;top:409.45px;" width="15.07" height="33.5" viewBox="0 0 15.07 33.5"><path d="M15.07 0 L0 5.2 V10.65 L7.84 7.84 V33.5 H15.07Z" fill="#fff"/></svg>
<div style="left:2416px;top:544.4px;width:94px;height:7.2px;background:#e6004d;"></div>
<div style="left:2378.5px;top:510.5px;width:75.0px;height:75.0px;border-radius:50%;background:#000"></div>
<svg style="left:2392.8px;top:533.95px;" width="15.07" height="33.5" viewBox="0 0 15.07 33.5"><path d="M15.07 0 L0 5.2 V10.65 L7.84 7.84 V33.5 H15.07Z" fill="#fff"/></svg>
<span style="left:2429.40px;top:527.68px;transform:translateX(-50%);font:bold 48px/48px 'Liberation Sans',sans-serif;color:#fff">2</span>
<div style="left:2416px;top:1237.9px;width:94px;height:7.2px;background:#e6004d;"></div>
<div style="left:2378.5px;top:1204.0px;width:75.0px;height:75.0px;border-radius:50%;background:#000"></div>
<svg style="left:2392.8px;top:1227.45px;" width="15.07" height="33.5" viewBox="0 0 15.07 33.5"><path d="M15.07 0 L0 5.2 V10.65 L7.84 7.84 V33.5 H15.07Z" fill="#fff"/></svg>
<span style="left:2429.40px;top:1221.18px;transform:translateX(-50%);font:bold 48px/48px 'Liberation Sans',sans-serif;color:#fff">3</span>
<div style="left:211px;top:591.4px;width:94px;height:7.2px;background:#e6004d;"></div>
<div style="left:173.5px;top:557.5px;width:75.0px;height:75.0px;border-radius:50%;background:#000"></div>
<svg style="left:187.8px;top:580.95px;" width="15.07" height="33.5" viewBox="0 0 15.07 33.5"><path d="M15.07 0 L0 5.2 V10.65 L7.84 7.84 V33.5 H15.07Z" fill="#fff"/></svg>
<span style="left:224.40px;top:574.68px;transform:translateX(-50%);font:bold 48px/48px 'Liberation Sans',sans-serif;color:#fff">4</span>
<div style="left:564.5px;top:591.4px;width:92.0px;height:7.2px;background:#e6004d;"></div>
<div style="left:619.0px;top:557.5px;width:75.0px;height:75.0px;border-radius:50%;background:#000"></div>
<svg style="left:633.3px;top:580.95px;" width="15.07" height="33.5" viewBox="0 0 15.07 33.5"><path d="M15.07 0 L0 5.2 V10.65 L7.84 7.84 V33.5 H15.07Z" fill="#fff"/></svg>
<span style="left:669.90px;top:574.68px;transform:translateX(-50%);font:bold 48px/48px 'Liberation Sans',sans-serif;color:#fff">5</span>
<div style="left:91.9px;top:308px;width:7.2px;height:93px;background:#e6004d;"></div>
<div style="left:58.0px;top:270.5px;width:75.0px;height:75.0px;border-radius:50%;background:#000"></div>
<svg style="left:72.3px;top:293.95px;" width="15.07" height="33.5" viewBox="0 0 15.07 33.5"><path d="M15.07 0 L0 5.2 V10.65 L7.84 7.84 V33.5 H15.07Z" fill="#fff"/></svg>
<span style="left:108.90px;top:287.68px;transform:translateX(-50%);font:bold 48px/48px 'Liberation Sans',sans-serif;color:#fff">7</span>
<div style="left:178.4px;top:308px;width:7.2px;height:93px;background:#e6004d;"></div>
<div style="left:144.5px;top:270.5px;width:75.0px;height:75.0px;border-radius:50%;background:#000"></div>
<svg style="left:158.8px;top:293.95px;" width="15.07" height="33.5" viewBox="0 0 15.07 33.5"><path d="M15.07 0 L0 5.2 V10.65 L7.84 7.84 V33.5 H15.07Z" fill="#fff"/></svg>
<span style="left:195.40px;top:287.68px;transform:translateX(-50%);font:bold 48px/48px 'Liberation Sans',sans-serif;color:#fff">8</span>
<div style="left:2019.9px;top:1027px;width:7.2px;height:92.5px;background:#e6004d;"></div>
<div style="left:1986.0px;top:989.5px;width:75.0px;height:75.0px;border-radius:50%;background:#000"></div>
<svg style="left:2000.3px;top:1012.95px;" width="15.07" height="33.5" viewBox="0 0 15.07 33.5"><path d="M15.07 0 L0 5.2 V10.65 L7.84 7.84 V33.5 H15.07Z" fill="#fff"/></svg>
<span style="left:2036.90px;top:1006.68px;transform:translateX(-50%);font:bold 48px/48px 'Liberation Sans',sans-serif;color:#fff">9</span>
<div style="left:1400px;top:698.9px;width:92.5px;height:7.2px;background:#e6004d;"></div>
<div style="left:1455.0px;top:665.0px;width:75.0px;height:75.0px;border-radius:50%;background:#000"></div>
<span style="left:1479.50px;top:682.18px;transform:translateX(-50%);font:bold 48px/48px 'Liberation Sans',sans-serif;color:#fff">2</span>
<span style="left:1505.90px;top:682.18px;transform:translateX(-50%);font:bold 48px/48px 'Liberation Sans',sans-serif;color:#fff">0</span>
</div></body></html>
